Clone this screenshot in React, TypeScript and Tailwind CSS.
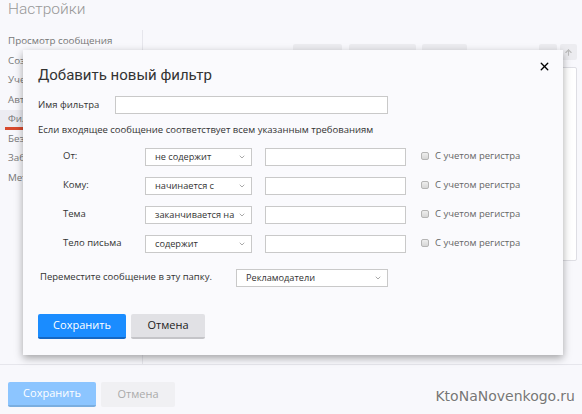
import { ChevronDown, X, ArrowUp } from "lucide-react";

const sideItems = [
  "Просмотр сообщения",
  "Создание сообщения",
  "Учетные записи",
  "Автоответ",
  "Фильтры",
  "Безопасность",
  "Заблокированные",
  "Метки",
];

const rules = [
  { label: "От:", op: "не содержит" },
  { label: "Кому:", op: "начинается с" },
  { label: "Тема", op: "заканчивается на" },
  { label: "Тело письма", op: "содержит" },
];

function Select({ value, w }: { value: string; w: string }) {
  return (
    <div className={`relative flex items-center h-[18px] bg-white border border-[#c9c9c9] pl-[9px] ${w}`}>
      <span className="whitespace-nowrap text-[9.2px] text-[#333]">{value}</span>
      <ChevronDown size={8} strokeWidth={1.5} className="absolute right-[5px] top-[4px] text-[#555]" />
    </div>
  );
}

function Check() {
  return <div className="w-[8px] h-[8px] rounded-[2px] border border-[#b5b5b5] bg-gradient-to-b from-[#eee] to-[#d6d6d6]" />;
}

/* ─── Modal ──────────────────────────────────────────────────────────────── */
function FilterModal() {
  return (
    <div className="absolute left-[23px] top-[50px] w-[540px] h-[305px] bg-[#fafafd] shadow-[0_3px_8px_rgba(0,0,0,0.35)] px-[15px] pt-[15px]">
      <button className="absolute right-[12px] top-[10px] text-black">
        <X size={13} strokeWidth={2.5} />
      </button>
      <h2 className="font-['Roboto',sans-serif] text-[15px] leading-[20px] text-[#333]">Добавить новый фильтр</h2>

      <div className="flex items-center mt-[11px] h-[18px]">
        <span className="w-[77px] text-[9.5px] text-[#333]">Имя фильтра</span>
        <div className="w-[273px] h-[18px] bg-white border border-[#c9c9c9]" />
      </div>

      <p className="mt-[9px] text-[9.5px] leading-[14px] text-[#333]">
        Если входящее сообщение соответствует всем указанным требованиям
      </p>

      <div className="mt-[11px] flex flex-col gap-[11px]">
        {rules.map((r) => (
          <div key={r.label} className="flex items-start h-[18px]">
            <span className="w-[107px] pl-[25px] leading-[15px] text-[9.5px] text-[#333] whitespace-nowrap">{r.label}</span>
            <Select value={r.op} w="w-[107px]" />
            <div className="ml-[13px] w-[141px] h-[18px] bg-white border border-[#c9c9c9]" />
            <div className="ml-[15px] flex items-center gap-[6px] h-[16px]">
              <Check />
              <span className="text-[9.5px] text-[#666]">С учетом регистра</span>
            </div>
          </div>
        ))}
      </div>

      <div className="flex items-start mt-[16px] h-[18px]">
        <span className="w-[198px] pl-[2px] leading-[15px] text-[9.5px] text-[#333]">Переместите сообщение в эту папку.</span>
        <Select value="Рекламодатели" w="w-[152px]" />
      </div>

      <div className="flex gap-[5px] mt-[27px]">
        <button className="w-[88px] h-[25px] bg-[#1a8cff] border-b-2 border-[#1467c4] rounded-[2px] text-[11px] text-white">
          Сохранить
        </button>
        <button className="w-[74px] h-[25px] bg-[#e1e1e5] border-b-2 border-[#c4c4c8] rounded-[2px] text-[11px] text-[#222]">
          Отмена
        </button>
      </div>
    </div>
  );
}

export default function App() {
  return (
    <div className="relative w-[582px] h-[414px] overflow-hidden bg-[#f8f8fc] font-['Open_Sans',sans-serif]">
      <h1 className="pl-[8px] font-['Roboto',sans-serif] font-light text-[15.5px] leading-[18px] text-[#999]">Настройки</h1>

      <div className="flex h-[335px] mt-[12px] border-b border-[#e6e6ec]">
        {/* Sidebar */}
        <div className="w-[143px] border-r border-[#e6e6ec] pt-[2px]">
          {sideItems.map((s, i) => (
            <div
              key={s}
              className={`relative h-[19.5px] flex items-center pl-[8px] text-[9.8px] text-[#777] ${i === 4 ? "bg-[#ececf2]" : ""}`}
            >
              {s}
              {i === 4 && <div className="absolute left-[5px] bottom-0 w-[19px] h-[3px] bg-[#d84a2e]" />}
            </div>
          ))}
        </div>

        {/* Content behind modal */}
        <div className="flex-1 pl-[15px] pr-[5px] pt-[14px]">
          <div className="flex items-start h-[16px]">
            <span className="w-[135px] pt-[4px] text-[10px] text-[#777]">Сохранять значение</span>
            <div className="w-[49px] h-[16px] bg-[#ececf0] rounded-[2px]" />
            <div className="ml-[7px] w-[67px] h-[16px] bg-[#ececf0] rounded-[2px]" />
            <div className="ml-[6px] w-[45px] h-[16px] bg-[#ececf0] rounded-[2px]" />
            <div className="ml-auto w-[18px] h-[16px] bg-[#ececf0] rounded-[2px]" />
            <div className="ml-[3px] w-[17px] h-[16px] bg-[#ececf0] rounded-[2px] flex items-center justify-center">
              <ArrowUp size={9} strokeWidth={3} className="text-[#bbb]" />
            </div>
          </div>
          <div className="mt-[7px] ml-[130px] h-[194px] bg-white border border-[#dedee4] rounded-[2px]" />
        </div>
      </div>

      <div className="flex gap-[5px] pl-[8px] mt-[17px]">
        <button className="w-[88px] h-[25px] bg-[#8cc5ff] border-b-2 border-[#7aaee0] rounded-[2px] text-[11px] text-white">
          Сохранить
        </button>
        <button className="w-[74px] h-[25px] bg-[#f0f0f3] rounded-[2px] text-[11px] text-[#aaa]">
          Отмена
        </button>
      </div>

      <div className="absolute right-[7px] bottom-[7px] text-[14px] text-[#777] font-['DejaVu_Sans',sans-serif] [text-shadow:0_0_3px_#fff,0_0_3px_#fff]">
        KtoNaNovenkogo.ru
      </div>

      <FilterModal />
    </div>
  );
}
